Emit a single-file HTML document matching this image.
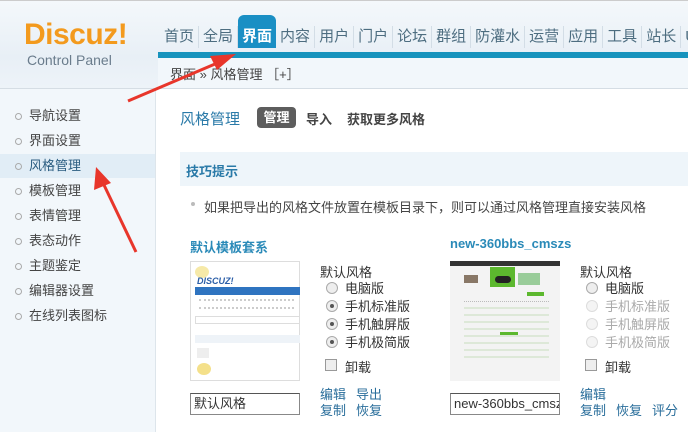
<!DOCTYPE html>
<html><head><meta charset="utf-8"><style>
*{margin:0;padding:0;box-sizing:border-box}
body{width:688px;height:432px;overflow:hidden;position:relative;background:#fff;font-family:"Liberation Sans","Noto Sans CJK SC",sans-serif;font-size:12px;color:#333}
.abs{position:absolute}
#hdr{left:0;top:0;width:688px;height:57px;background:linear-gradient(#f4f8fb,#e8eff6);border-top:1px solid #ccc}
#hdrl{left:0;top:57px;width:158px;height:32px;background:linear-gradient(#e8eff6,#edf3f8);border-bottom:1px solid #d5dde4}
#logo{left:24px;top:18px;font-size:30px;font-weight:bold;color:#f39a1e;letter-spacing:-0.5px;line-height:34px}
#cp{left:27px;top:51px;font-size:14px;color:#6a7c8c;line-height:18px}
#nav{left:160px;top:26px;height:22px;display:flex;font-size:15px;color:#4d6d80;line-height:22px;white-space:nowrap}
#nav span{padding:0 4px;border-right:1px solid #d3dde6}
#nav span.on{background:#1a8fc4;color:#fff;border-radius:6px 6px 0 0;margin-top:-11px;padding:11px 4px 9px 4px;font-weight:bold;border:none}
#bar{left:158px;top:52px;width:530px;height:6px;background:#1793bd}
#crumb{left:158px;top:58px;width:530px;height:31px;background:#f2f7fb;border-bottom:1px solid #d5dde4;font-size:13px;color:#444;line-height:34px;padding-left:12px}
#side{left:0;top:89px;width:156px;height:343px;background:#f2f7fb;border-right:1px solid #dde5eb}
.si{position:absolute;left:0;width:155px;height:24px;line-height:24px;font-size:13px;color:#444;padding-left:29px}
.si:before{content:"";position:absolute;left:15px;top:9px;width:5px;height:5px;border:1px solid #aaa;border-radius:50%}
.si.on{background:#e1edf6;color:#2a5c80}
#main{left:160px;top:90px;width:528px;height:342px;background:#fff}
.t{position:absolute;white-space:nowrap}
.lnk{color:#2a6e9b;font-size:13px}
.rad{position:absolute;width:12px;height:12px;border-radius:50%;border:1px solid #aaa;background:#eee}
.rad.c:after{content:"";position:absolute;left:3px;top:3px;width:4px;height:4px;border-radius:50%;background:#555}
.rad.d{border-color:#ddd;background:#f4f4f4}
.chk{position:absolute;width:12px;height:12px;border:1px solid #999;background:#eee}
.inp{position:absolute;height:22px;border:1px solid #888;border-top-color:#555;font-size:13px;padding-left:3px;line-height:20px;overflow:hidden;white-space:nowrap;background:#fff}
</style></head><body>
<div id="hdr" class="abs"></div>
<div id="hdrl" class="abs"></div>
<div id="logo" class="abs">Discuz!</div>
<div id="cp" class="abs">Control Panel</div>
<div id="nav" class="abs"><span>首页</span><span>全局</span><span class="on">界面</span><span>内容</span><span>用户</span><span>门户</span><span>论坛</span><span>群组</span><span>防灌水</span><span>运营</span><span>应用</span><span>工具</span><span>站长</span><span>U</span></div>
<div id="bar" class="abs"></div>
<div id="crumb" class="abs">界面 » 风格管理 ［+］</div>
<div id="side" class="abs">
<div class="si" style="top:15px">导航设置</div>
<div class="si" style="top:40px">界面设置</div>
<div class="si on" style="top:65px">风格管理</div>
<div class="si" style="top:90px">模板管理</div>
<div class="si" style="top:115px">表情管理</div>
<div class="si" style="top:140px">表态动作</div>
<div class="si" style="top:165px">主题鉴定</div>
<div class="si" style="top:190px">编辑器设置</div>
<div class="si" style="top:215px">在线列表图标</div>
</div>
<div id="main" class="abs"></div>
<div class="t" style="left:180px;top:108px;font-size:15px;color:#2a7aa8">风格管理</div>
<div class="t" style="left:257px;top:107px;width:39px;height:21px;background:#5d5d5d;border-radius:4px;color:#fff;font-size:13px;font-weight:bold;text-align:center;line-height:21px">管理</div>
<div class="t" style="left:306px;top:109px;font-size:13px;font-weight:bold;color:#444">导入</div>
<div class="t" style="left:347px;top:109px;font-size:13px;font-weight:bold;color:#444">获取更多风格</div>
<div class="abs" style="left:180px;top:152px;width:508px;height:34px;background:#eef5fa"></div>
<div class="t" style="left:186px;top:161px;font-size:13px;font-weight:bold;color:#2a7aa8">技巧提示</div>
<div class="abs" style="left:191px;top:202px;width:4px;height:4px;border-radius:50%;background:#bbb"></div>
<div class="t" style="left:204px;top:197px;font-size:13px;color:#444">如果把导出的风格文件放置在模板目录下，则可以通过风格管理直接安装风格</div>
<div class="t" style="left:190px;top:237px;font-size:13px;font-weight:bold;color:#2a8ab8">默认模板套系</div>
<div class="t" style="left:450px;top:236px;font-size:13px;font-weight:bold;color:#2a8ab8">new-360bbs_cmszs</div>
<div class="abs" style="left:190px;top:261px;width:110px;height:120px;border:1px solid #ddd;background:#fff">
<div class="abs" style="left:4px;top:4px;width:14px;height:12px;border-radius:50%;background:#f6e9a8"></div>
<div class="abs" style="left:6px;top:14px;font-size:9px;font-style:italic;font-weight:bold;color:#2c5fa8">DISCUZ!</div>
<div class="abs" style="left:4px;top:25px;width:105px;height:8px;background:#2f74c0"></div>
<div class="abs" style="left:8px;top:37px;width:95px;height:10px;border-top:2px dotted #ccc;border-bottom:2px dotted #ccc"></div>
<div class="abs" style="left:4px;top:54px;width:105px;height:8px;border:1px solid #ddd"></div>
<div class="abs" style="left:4px;top:73px;width:105px;height:8px;background:#eef3f8"></div>
<div class="abs" style="left:6px;top:86px;width:12px;height:10px;background:#eee"></div>
<div class="abs" style="left:6px;top:101px;width:14px;height:12px;border-radius:50%;background:#f4e08a"></div>
</div>
<div class="abs" style="left:450px;top:261px;width:110px;height:120px;background:#f3f3f3">
<div class="abs" style="left:0;top:0;width:110px;height:5px;background:#333"></div>
<div class="abs" style="left:40px;top:6px;width:25px;height:20px;background:#5cb82e"></div>
<div class="abs" style="left:45px;top:15px;width:16px;height:7px;border-radius:4px;background:#222"></div>
<div class="abs" style="left:68px;top:12px;width:22px;height:12px;background:#9c9"></div>
<div class="abs" style="left:14px;top:14px;width:14px;height:8px;background:#876"></div>
<div class="abs" style="left:77px;top:31px;width:17px;height:4px;background:#5cb82e"></div>
<div class="abs" style="left:14px;top:40px;width:85px;height:60px;border-top:1px dotted #bbb;background:repeating-linear-gradient(#f3f3f3 0 5px,#dde8d8 5px 7px)"></div>
<div class="abs" style="left:50px;top:71px;width:18px;height:3px;background:#5cb82e"></div>
</div>
<div class="t" style="left:320px;top:262px;font-size:13px">默认风格</div>
<div class="rad" style="left:326px;top:282px"></div><div class="t" style="left:345px;top:278px;font-size:13px">电脑版</div>
<div class="rad c" style="left:326px;top:300px"></div><div class="t" style="left:345px;top:296px;font-size:13px">手机标准版</div>
<div class="rad c" style="left:326px;top:318px"></div><div class="t" style="left:345px;top:314px;font-size:13px">手机触屏版</div>
<div class="rad c" style="left:326px;top:336px"></div><div class="t" style="left:345px;top:332px;font-size:13px">手机极简版</div>
<div class="chk" style="left:325px;top:359px"></div><div class="t" style="left:345px;top:357px;font-size:13px">卸载</div>
<div class="t lnk" style="left:320px;top:384px">编辑</div><div class="t lnk" style="left:356px;top:384px">导出</div>
<div class="t lnk" style="left:320px;top:400px">复制</div><div class="t lnk" style="left:356px;top:400px">恢复</div>
<div class="inp" style="left:190px;top:393px;width:110px">默认风格</div>
<div class="t" style="left:580px;top:262px;font-size:13px">默认风格</div>
<div class="rad" style="left:586px;top:282px"></div><div class="t" style="left:605px;top:278px;font-size:13px">电脑版</div>
<div class="rad d" style="left:586px;top:300px"></div><div class="t" style="left:605px;top:296px;font-size:13px;color:#aaa">手机标准版</div>
<div class="rad d" style="left:586px;top:318px"></div><div class="t" style="left:605px;top:314px;font-size:13px;color:#aaa">手机触屏版</div>
<div class="rad d" style="left:586px;top:336px"></div><div class="t" style="left:605px;top:332px;font-size:13px;color:#aaa">手机极简版</div>
<div class="chk" style="left:585px;top:359px"></div><div class="t" style="left:605px;top:357px;font-size:13px">卸载</div>
<div class="t lnk" style="left:580px;top:384px">编辑</div>
<div class="t lnk" style="left:580px;top:400px">复制</div><div class="t lnk" style="left:616px;top:400px">恢复</div><div class="t lnk" style="left:652px;top:400px">评分</div>
<div class="inp" style="left:450px;top:393px;width:110px">new-360bbs_cmszs</div>
<svg class="abs" style="left:0;top:0" width="688" height="432">
<line x1="128" y1="101" x2="215" y2="64" stroke="#e8362b" stroke-width="3"/>
<polygon points="236,54 210,56 217,70" fill="#e8362b"/>
<line x1="136" y1="252" x2="104" y2="185" stroke="#e8362b" stroke-width="3"/>
<polygon points="96,167 94,190 111,183" fill="#e8362b"/>
</svg>
</body></html>
